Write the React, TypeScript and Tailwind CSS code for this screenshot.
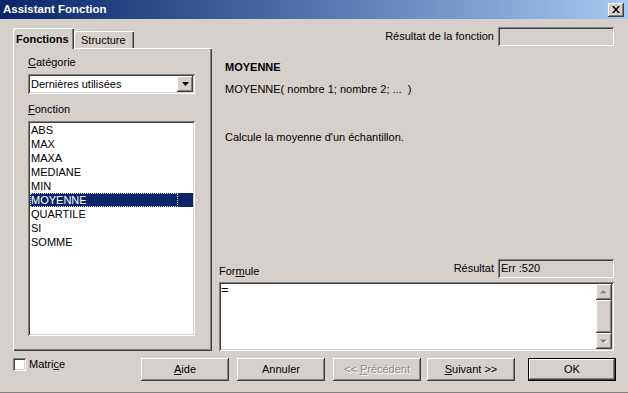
import React from "react";

const raised =
  "shadow-[inset_-1px_-1px_#404040,inset_1px_1px_#ffffff,inset_-2px_-2px_#808080,inset_2px_2px_#d6d0cc]";
const sunken =
  "shadow-[inset_1px_1px_#808080,inset_-1px_-1px_#ffffff,inset_2px_2px_#404040,inset_-2px_-2px_#d6d0cc]";

function Btn({
  children,
  className = "",
  disabled = false,
  def = false,
}: {
  children: React.ReactNode;
  className?: string;
  disabled?: boolean;
  def?: boolean;
}) {
  if (def) {
    return (
      <div className={`h-[23px] w-[88px] border border-black ${className}`}>
        <div className={`h-full w-full flex items-center justify-center ${raised}`}>{children}</div>
      </div>
    );
  }
  return (
    <div
      className={`h-[23px] w-[88px] flex items-center justify-center ${raised} ${
        disabled ? "text-[#8a8a8a] [text-shadow:1px_1px_0_#ffffff]" : ""
      } ${className}`}
    >
      {children}
    </div>
  );
}

const items = ["ABS", "MAX", "MAXA", "MEDIANE", "MIN", "MOYENNE", "QUARTILE", "SI", "SOMME"];

export default function App() {
  return (
    <div className="w-[628px] h-[393px] bg-[#d6d0cc] flex flex-col overflow-hidden border-b border-[#808080] text-[11px] leading-[13px] text-black font-['Liberation_Sans',Arial,sans-serif]">
      {/* Title bar */}
      <div className="h-[19px] shrink-0 flex items-center justify-between bg-gradient-to-r from-[#0a246a] to-[#a6caf0] pl-[3px] pr-[4px]">
        <span className="text-white font-bold text-[11.5px]">Assistant Fonction</span>
        <div className={`w-[16px] h-[14px] bg-[#d6d0cc] flex items-center justify-center ${raised}`}>
          <svg width="8" height="7" viewBox="0 0 8 7">
            <path d="M0 0h2l2 2.5L6 0h2L5 3.5 8 7H6L4 4.5 2 7H0l3-3.5z" fill="#000" />
          </svg>
        </div>
      </div>

      {/* Main */}
      <div className="h-[333px] shrink-0 flex">
        {/* Left column */}
        <div className="ml-[13px] w-[199px] flex flex-col pt-[9px]">
          <div className="h-[20px] flex items-end">
            <div className="relative z-10 h-[21px] -mb-[1px] w-[61px] bg-[#d6d0cc] rounded-tl-[2px] shadow-[inset_1px_1px_#ffffff,inset_-1px_0_#404040,inset_-2px_0_#808080] font-bold pl-[3px] pt-[5px]">
              Fonctions
            </div>
            <div className="h-[17px] w-[60px] rounded-tl-[2px] shadow-[inset_1px_1px_#ffffff,inset_-1px_0_#404040,inset_-2px_0_#808080] pl-[7px] pt-[3px]">
              Structure
            </div>
          </div>
          <div className="h-[303px] shadow-[inset_1px_1px_#ffffff,inset_-1px_-1px_#404040,inset_-2px_-2px_#808080] pl-[15px] pt-[8px] flex flex-col">
            <div>
              <span className="underline">C</span>atégorie
            </div>
            <div className={`relative mt-[5px] h-[20px] w-[167px] bg-white ${sunken} pl-[3px] flex items-center`}>
              Dernières utilisées
              <div className={`absolute right-[2px] top-[2px] w-[16px] h-[16px] bg-[#d6d0cc] flex items-center justify-center ${raised}`}>
                <svg width="7" height="4" viewBox="0 0 7 4">
                  <path d="M0 0h7L3.5 4z" fill="#000" />
                </svg>
              </div>
            </div>
            <div className="mt-[9px]">
              <span className="underline">F</span>onction
            </div>
            <div className={`mt-[5px] h-[215px] w-[167px] bg-white ${sunken} p-[2px] flex flex-col`}>
              {items.map((it) => {
                const sel = it === "MOYENNE";
                return (
                  <div
                    key={it}
                    className={`relative h-[14px] leading-[14px] pl-[1px] ${sel ? "bg-[#0a246a] text-white" : ""}`}
                  >
                    {it}
                    {sel && (
                      <div className="absolute left-0 top-0 h-[14px] w-[148px] border border-dotted border-[#e8e8b0]" />
                    )}
                  </div>
                );
              })}
            </div>
          </div>
        </div>

        {/* Right column */}
        <div className="ml-[7px] w-[395px] flex flex-col pt-[8px]">
          <div className="h-[19px] flex items-center justify-end">
            <span className="mr-[4px]">Résultat de la fonction</span>
            <div className={`h-[19px] w-[116px] ${sunken}`} />
          </div>
          <div className="pl-[6px] mt-[15px] font-bold">MOYENNE</div>
          <div className="pl-[6px] mt-[9px]">MOYENNE( nombre 1; nombre 2; ...&nbsp; )</div>
          <div className="pl-[6px] mt-[35px]">Calcule la moyenne d'un échantillon.</div>
          <div className="flex-1" />
          <div className="h-[19px] flex items-center">
            <span className="mt-[5px]">
              For<span className="underline">m</span>ule
            </span>
            <div className="flex-1" />
            <span className="mr-[4px]">Résultat</span>
            <div className={`h-[19px] w-[116px] ${sunken} pl-[3px] flex items-center`}>Err :520</div>
          </div>
          <div className={`relative mt-[4px] mb-[1px] h-[69px] bg-white ${sunken} pl-[2px] pt-[1px] text-[13px] leading-[14px]`}>
            =
            <div className="absolute right-[2px] top-[2px] bottom-[2px] w-[16px] flex flex-col bg-[#ece9e4]">
              <div className={`h-[16px] bg-[#d6d0cc] flex items-center justify-center ${raised}`}>
                <svg width="8" height="5" viewBox="0 0 8 5">
                  <path d="M1 4h7L4.5 0.5z" fill="#ffffff" />
                  <path d="M0 3.5h7L3.5 0z" fill="#808080" />
                </svg>
              </div>
              <div className={`flex-1 bg-[#d6d0cc] ${raised}`} />
              <div className={`h-[16px] bg-[#d6d0cc] flex items-center justify-center ${raised}`}>
                <svg width="8" height="5" viewBox="0 0 8 5">
                  <path d="M1 1h7L4.5 4.5z" fill="#ffffff" />
                  <path d="M0 0.5h7L3.5 4z" fill="#808080" />
                </svg>
              </div>
            </div>
          </div>
        </div>
      </div>

      {/* Bottom row */}
      <div className="flex-1 flex items-start pt-[6px]">
        <div className="ml-[13px] w-[128px] flex items-center">
          <div className={`w-[13px] h-[13px] bg-white ${sunken}`} />
          <span className="ml-[3px]">
            Matri<span className="underline">c</span>e
          </span>
        </div>
        <Btn>
          <span>
            <span className="underline">A</span>ide
          </span>
        </Btn>
        <Btn className="ml-[8px]">Annuler</Btn>
        <Btn className="ml-[8px]" disabled>
          <span>
            &lt;&lt; <span className="underline">P</span>récédent
          </span>
        </Btn>
        <Btn className="ml-[6px]">
          <span>
            <span className="underline">S</span>uivant &gt;&gt;
          </span>
        </Btn>
        <Btn className="ml-[13px]" def>
          OK
        </Btn>
      </div>
    </div>
  );
}
